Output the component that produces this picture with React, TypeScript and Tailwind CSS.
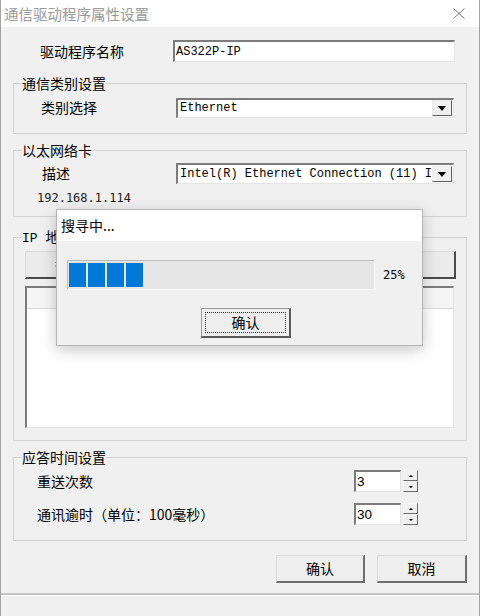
import React, { FC, ReactNode } from 'react';

const mono = "font-['Liberation_Mono',monospace]";

const Sunken: FC<{ className?: string; children?: ReactNode }> = ({ className = '', children }) => (
  <div
    className={`border-t-2 border-l-2 border-r border-b border-t-[#7c7c7c] border-l-[#7c7c7c] border-r-[#e4e4e4] border-b-[#e4e4e4] bg-white ${className}`}
  >
    {children}
  </div>
);

const Group: FC<{ title: ReactNode; className?: string; children: ReactNode }> = ({
  title,
  className = '',
  children,
}) => (
  <fieldset className={`ml-[12px] w-[454px] border border-[#d2d2d2] ${className}`}>
    <legend className="ml-[8px] text-[14px] leading-[18px]">{title}</legend>
    {children}
  </fieldset>
);

const Combo: FC<{ text: string; className?: string }> = ({ text, className = '' }) => (
  <Sunken className={`flex w-[278px] items-center ${className}`}>
    <span className={`flex-1 whitespace-nowrap pl-[2px] text-[12px] leading-[14px] ${mono}`}>{text}</span>
    <div className="mr-[1px] flex h-[16px] w-[20px] items-center justify-center border border-t-[#ececec] border-l-[#ececec] border-r-[#5c5c5c] border-b-[#5c5c5c] bg-[#f0f0f0]">
      <div className="h-0 w-0 border-x-[4px] border-t-[5px] border-x-transparent border-t-black" />
    </div>
  </Sunken>
);

const Spin: FC<{ value: string; className?: string }> = ({ value, className = '' }) => (
  <div className={`flex ${className}`}>
    <Sunken className="h-[22px] w-[47px] pl-[1px] font-['Liberation_Sans',sans-serif] text-[13.5px] leading-[19px]">
      {value}
    </Sunken>
    <div className="ml-[2px] flex w-[15px] flex-col">
      <div className="flex h-[11px] items-center justify-center border border-t-[#f4f4f4] border-l-[#f4f4f4] border-r-[#6a6a6a] border-b-[#6a6a6a]">
        <div className="h-0 w-0 border-x-[2px] border-b-[2px] border-x-transparent border-b-black" />
      </div>
      <div className="flex h-[11px] items-center justify-center border border-t-[#f4f4f4] border-l-[#f4f4f4] border-r-[#6a6a6a] border-b-[#6a6a6a]">
        <div className="h-0 w-0 border-x-[2px] border-t-[2px] border-x-transparent border-t-black" />
      </div>
    </div>
  </div>
);

const WinButton: FC<{ label: string; className?: string }> = ({ label, className = '' }) => (
  <div
    className={`flex h-[28px] items-center justify-center border-t border-l border-r-2 border-b-2 border-t-[#dadada] border-l-[#dadada] border-r-[#6e6e6e] border-b-[#6e6e6e] bg-[#eeeeee] text-[14px] ${className}`}
  >
    {label}
  </div>
);

export default function App() {
  return (
    <div className="relative flex h-[616px] w-[480px] flex-col border-r border-l border-[#a4a4a4] bg-[#f0f0f0] font-['Noto_Sans_CJK_SC',sans-serif] text-black">
      {/* title bar */}
      <div className="flex h-[27px] items-center justify-between bg-white pl-[3px] pr-[14px]">
        <span className="text-[14.5px] text-[#9a9a9a]">通信驱动程序属性设置</span>
        <svg width="12" height="11" viewBox="0 0 12 11">
          <path d="M0.5 0.5 L11.5 10.5 M11.5 0.5 L0.5 10.5" stroke="#777" strokeWidth="1" />
        </svg>
      </div>

      {/* driver name */}
      <div className="mt-[13px] flex items-center">
        <span className="ml-[39px] w-[133px] text-[14px]">驱动程序名称</span>
        <Sunken className={`flex h-[22px] w-[282px] items-center pl-[1px] text-[12px] ${mono}`}>AS322P-IP</Sunken>
      </div>

      <Group title="通信类别设置" className="mt-[12px] pb-[15px]">
        <div className="mt-[5px] flex items-center">
          <span className="ml-[27px] w-[135px] text-[14px]">类别选择</span>
          <Combo text="Ethernet" className="h-[20px]" />
        </div>
      </Group>

      <Group title="以太网络卡" className="mt-[7px] pb-[10px]">
        <div className="mt-[4px] flex items-center">
          <span className="ml-[28px] w-[134px] text-[14px]">描述</span>
          <Combo text="Intel(R) Ethernet Connection (11) I" className="h-[21px]" />
        </div>
        <div className="ml-[23px] mt-[6px] font-['DejaVu_Sans_Mono',monospace] text-[12px] leading-[16px] text-[#222]">
          192.168.1.114
        </div>
      </Group>

      <Group
        title={
          <>
            <span className={`text-[13px] ${mono}`}>IP </span>地址设置
          </>
        }
        className="mt-[10px] pb-[12px]"
      >
        <div className="ml-[11px] mt-[3px] flex h-[28px] w-[431px] items-center border-t border-l border-r-2 border-b-2 border-t-[#dadada] border-l-[#dadada] border-r-[#4a4a4a] border-b-[#4a4a4a] bg-[#ebebeb] pl-[29px] text-[14px]">
          扫描
        </div>
        <Sunken className="ml-[11px] mt-[7px] h-[142px] w-[429px]">
          <div className="h-[21px] border-b border-[#d8d8d8] bg-[#f5f5f5]" />
        </Sunken>
      </Group>

      <Group title="应答时间设置" className="mt-[7px] pb-[15px]">
        <div className="mt-[4px] flex items-center">
          <span className="ml-[23px] w-[317px] text-[14px]">重送次数</span>
          <Spin value="3" />
        </div>
        <div className="mt-[11px] flex items-center">
          <span className="ml-[23px] w-[317px] text-[14px]">通讯逾时（单位：100毫秒）</span>
          <Spin value="30" />
        </div>
      </Group>

      <div className="mt-[14px] flex gap-[12px] pl-[275px]">
        <WinButton label="确认" className="w-[89px]" />
        <WinButton label="取消" className="w-[90px]" />
      </div>

      {/* status bar */}
      <div className="mt-auto h-[23px] border-t-2 border-t-[#c4c4c4] shadow-[inset_0_1px_0_#fff]" />

      {/* progress dialog */}
      <div className="absolute left-[55px] top-[209px] flex h-[137px] w-[367px] flex-col border border-[#b4b4b4] bg-[#f0f0f0] shadow-[0_4px_14px_rgba(0,0,0,0.22)]">
        <div className="flex h-[31px] items-center bg-white pl-[4px] text-[14px]">搜寻中...</div>
        <div className="mt-[19px] flex items-center">
          <div className="ml-[10px] flex h-[30px] w-[308px] gap-[2px] border border-t-[#bcbcbc] border-l-[#bcbcbc] border-r-[#f8f8f8] border-b-[#f8f8f8] bg-[#e6e6e6] py-[2px] pl-[1px]">
            <div className="w-[17px] bg-[#0078d7]" />
            <div className="w-[17px] bg-[#0078d7]" />
            <div className="w-[17px] bg-[#0078d7]" />
            <div className="w-[17px] bg-[#0078d7]" />
          </div>
          <span className="ml-[8px] font-['DejaVu_Sans_Mono',monospace] text-[12px]">25%</span>
        </div>
        <div className="ml-[144px] mt-[18px] flex h-[30px] w-[90px] items-center justify-center border border-t-[#9a9a9a] border-l-[#9a9a9a] border-r-2 border-b-2 border-r-[#5a5a5a] border-b-[#5a5a5a] bg-[#eeeeee] p-[3px]">
          <div className="flex h-full w-full items-center justify-center border border-dotted border-[#333] text-[14px]">
            确认
          </div>
        </div>
      </div>
    </div>
  );
}
